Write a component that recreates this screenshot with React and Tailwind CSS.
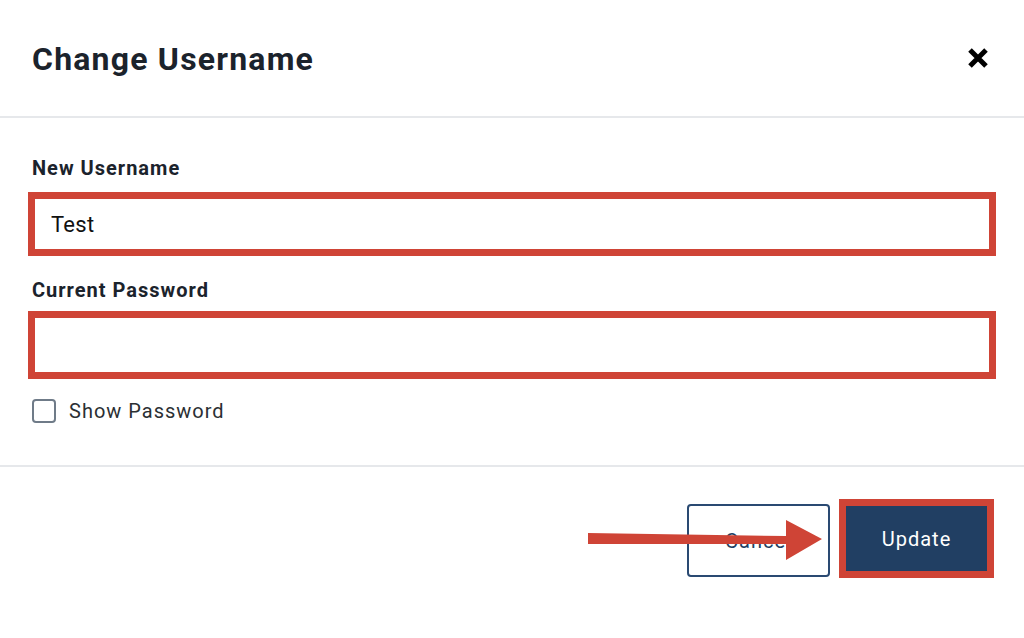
import { useState } from "react";

export default function App() {
  const [username, setUsername] = useState("Test");
  const [password, setPassword] = useState("");
  const [showPassword, setShowPassword] = useState(false);

  return (
    <div
      className="relative w-[1024px] h-[638px] bg-white overflow-hidden text-[#1b232c]"
      style={{ fontFamily: "Roboto, 'Liberation Sans', sans-serif" }}
    >
      {/* Header */}
      <div className="h-[118px] flex items-center justify-between pl-[32px] pr-[34px] border-b-2 border-[#e6e8eb]">
        <h2 className="text-[32px] font-bold tracking-[1.2px] leading-none pt-[1px]">
          Change Username
        </h2>
        <button className="w-[24px] h-[24px] flex items-center justify-center cursor-pointer">
          <svg width="24" height="24" viewBox="0 0 24 24">
            <path
              d="M4 4 L20 20 M20 4 L4 20"
              stroke="#000"
              strokeWidth="5"
              strokeLinecap="butt"
            />
          </svg>
        </button>
      </div>

      {/* Body */}
      <div className="px-[28px] pt-[38px] h-[349px] border-b-2 border-[#e6e8eb]">
        <label className="block pl-[4px] text-[20px] leading-[24px] font-bold tracking-[1px]">
          New Username
        </label>
        <input
          value={username}
          onChange={(e) => setUsername(e.target.value)}
          className="mt-[12px] block w-full h-[64px] border-[7px] border-[#cf4436] px-[16px] text-[22px] tracking-[0.3px] text-[#111] outline-none"
        />
        <label className="block mt-[22px] pl-[4px] text-[20px] leading-[24px] font-bold tracking-[1px]">
          Current Password
        </label>
        <input
          type={showPassword ? "text" : "password"}
          value={password}
          onChange={(e) => setPassword(e.target.value)}
          className="mt-[9px] block w-full h-[68px] border-[7px] border-[#cf4436] px-[16px] text-[22px] outline-none"
        />
        <label className="mt-[20px] ml-[4px] flex items-center gap-[13px] cursor-pointer w-fit">
          <input
            type="checkbox"
            checked={showPassword}
            onChange={(e) => setShowPassword(e.target.checked)}
            className="appearance-none w-[24px] h-[24px] rounded-[4px] border-2 border-[#6f7b88] bg-white checked:bg-[#213f63]"
          />
          <span className="text-[20px] leading-[24px] tracking-[1px] text-[#2b2f33]">Show Password</span>
        </label>
      </div>

      {/* Footer */}
      <div className="flex justify-end items-start pt-[32px] pr-[30px] gap-[9px]">
        <button className="mt-[5px] w-[143px] h-[73px] rounded-[4px] border-2 border-[#2a4a72] text-[#213f63] text-[20px] tracking-[1px] cursor-pointer">
          Cancel
        </button>
        <button className="w-[155px] h-[79px] border-[7px] border-[#cf4436] bg-[#213f63] text-white text-[20px] tracking-[1px] cursor-pointer">
          Update
        </button>
      </div>

      {/* Annotation arrow */}
      <svg
        className="absolute left-[586px] top-[518px] pointer-events-none"
        width="240"
        height="44"
        viewBox="0 0 240 44"
      >
        <path d="M2 15 L200 18 L200 2 L236 21 L200 42 L200 26 L2 26 Z" fill="#cf4436" />
      </svg>
    </div>
  );
}
